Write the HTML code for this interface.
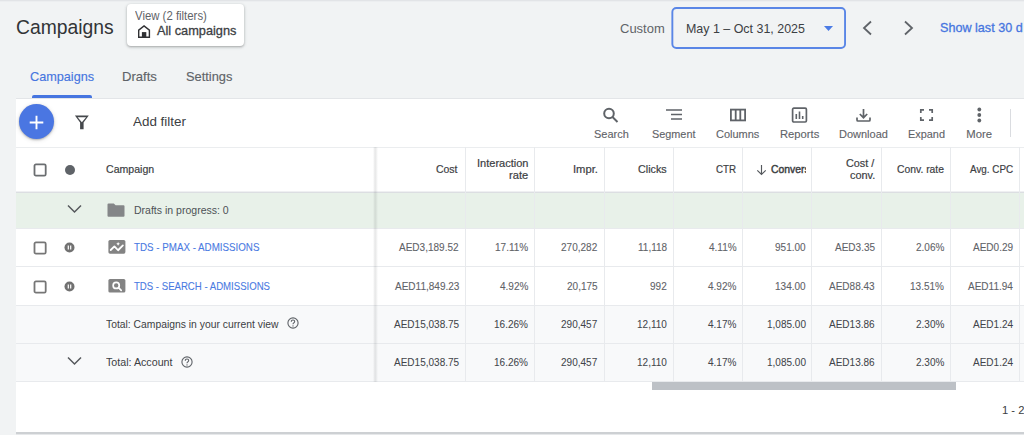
<!DOCTYPE html>
<html><head><meta charset="utf-8"><style>
html,body{margin:0;padding:0}
body{width:1024px;height:435px;overflow:hidden;background:#f1f3f4;position:relative;font-family:"Liberation Sans",sans-serif}
.t{position:absolute;white-space:nowrap;line-height:1;transform-origin:0 0}
.r{position:absolute;box-sizing:content-box}
svg.r{overflow:visible}
</style></head><body>
<div class="r" style="left:0px;top:0px;width:1024px;height:1px;background:#e2e4e7"></div>
<div class="r" style="left:0px;top:1px;width:1024px;height:1px;background:#eceef0"></div>
<span class="t" style="left:15.54px;top:17.37px;font-size:20.5px;color:#323437;transform:scaleX(0.9413);">Campaigns</span>
<div class="r" style="left:127px;top:4px;width:117px;height:42px;background:#fff;border-radius:4px;box-shadow:0 1px 2px rgba(60,64,67,.3),0 1px 3px 1px rgba(60,64,67,.12)"></div>
<span class="t" style="left:135.24px;top:10.10px;font-size:12px;color:#5f6368;transform:scaleX(0.9480);">View (2 filters)</span>
<svg class="r" style="left:138px;top:25px" width="13" height="13" viewBox="0 0 13 13"><path d="M0.7 12.3 V5.2 L6.05 0.9 L11.4 5.2 V12.3 Z" fill="none" stroke="#303134" stroke-width="1.4" stroke-linejoin="miter"/><rect x="3.9" y="7.1" width="4.4" height="5.6" fill="#303134"/></svg>
<span class="t" style="left:156.64px;top:24.45px;font-size:13px;color:#3c4043;-webkit-text-stroke:0.3px #3c4043;transform:scaleX(0.9813);">All campaigns</span>
<span class="t" style="left:620.15px;top:22.82px;font-size:12.8px;color:#5f6368;transform:scaleX(1.0150);">Custom</span>
<svg class="r" style="left:670px;top:6px" width="178" height="45" viewBox="0 0 178 45"><rect x="2.35" y="1.95" width="172.7" height="40.1" rx="4" fill="none" stroke="#5a86e6" stroke-width="1.9"/></svg>
<span class="t" style="left:685.61px;top:22.15px;font-size:13px;color:#3c4043;transform:scaleX(0.9566);">May 1 – Oct 31, 2025</span>
<svg class="r" style="left:823px;top:25px" width="11" height="7" viewBox="0 0 11 7"><path d="M1 1 L10 1 L5.5 6 Z" fill="#4b7be5"/></svg>
<svg class="r" style="left:860px;top:19px" width="14" height="18" viewBox="0 0 14 18"><path d="M11 2.5 L4 9 L11 15.5" fill="none" stroke="#5f6368" stroke-width="1.8"/></svg>
<svg class="r" style="left:902px;top:19px" width="14" height="18" viewBox="0 0 14 18"><path d="M3 2.5 L10 9 L3 15.5" fill="none" stroke="#5f6368" stroke-width="1.8"/></svg>
<span class="t" style="left:939.63px;top:21.45px;font-size:13px;color:#4675e0;-webkit-text-stroke:0.3px #4675e0;transform:scaleX(0.9697);">Show last 30 d</span>
<span class="t" style="left:30.27px;top:69.78px;font-size:13.2px;color:#4675e0;-webkit-text-stroke:0.15px #4675e0;transform:scaleX(0.9609);">Campaigns</span>
<span class="t" style="left:122.45px;top:69.78px;font-size:13.2px;color:#5f6368;-webkit-text-stroke:0.15px #5f6368;transform:scaleX(0.9923);">Drafts</span>
<span class="t" style="left:185.62px;top:69.78px;font-size:13.2px;color:#5f6368;-webkit-text-stroke:0.15px #5f6368;transform:scaleX(0.9730);">Settings</span>
<div class="r" style="left:32px;top:95px;width:60px;height:3px;background:#4675e0;border-radius:2px 2px 0 0"></div>
<div class="r" style="left:16px;top:98px;width:1010px;height:335px;background:#fff;border-top:1px solid #e3e5e8"></div>
<div class="r" style="left:16px;top:432px;width:1010px;height:1.5px;background:#cdd0d3"></div>
<div class="r" style="left:16px;top:433.5px;width:1010px;height:1.5px;background:#e6e8ea"></div>
<div class="r" style="left:16px;top:147px;width:1010px;height:1px;background:#ebedef"></div>
<div class="r" style="left:19.2px;top:104.3px;width:35px;height:35px;background:#4a76e2;border-radius:50%;box-shadow:0 1px 2px rgba(0,0,0,.25),0 1px 5px rgba(0,0,0,.12)"></div>
<svg class="r" style="left:29px;top:114.5px" width="15" height="15" viewBox="0 0 15 15"><path d="M7.5 0.7 V14.3 M0.7 7.5 H14.3" stroke="#fff" stroke-width="1.9"/></svg>
<svg class="r" style="left:74px;top:115px" width="16" height="15" viewBox="0 0 16 15"><path d="M0.9 0.5 H14.8 L9.6 7.4 V14.3 H6.1 V7.4 Z M3.6 2.2 L7.85 7.2 L12.1 2.2 Z" fill="#45484c" fill-rule="evenodd"/></svg>
<span class="t" style="left:133.43px;top:116.32px;font-size:12.8px;color:#3c4043;transform:scaleX(1.0490);">Add filter</span>
<span class="t" style="left:593.51px;top:128.50px;font-size:11.3px;color:#5f6368;-webkit-text-stroke:0.12px #5f6368;transform:scaleX(0.9704);">Search</span>
<span class="t" style="left:651.81px;top:128.50px;font-size:11.3px;color:#5f6368;-webkit-text-stroke:0.12px #5f6368;transform:scaleX(0.9611);">Segment</span>
<span class="t" style="left:716.15px;top:128.50px;font-size:11.3px;color:#5f6368;-webkit-text-stroke:0.12px #5f6368;transform:scaleX(0.9721);">Columns</span>
<span class="t" style="left:779.50px;top:128.50px;font-size:11.3px;color:#5f6368;-webkit-text-stroke:0.12px #5f6368;transform:scaleX(0.9935);">Reports</span>
<span class="t" style="left:839.12px;top:128.50px;font-size:11.3px;color:#5f6368;-webkit-text-stroke:0.12px #5f6368;transform:scaleX(0.9735);">Download</span>
<span class="t" style="left:908.13px;top:128.50px;font-size:11.3px;color:#5f6368;-webkit-text-stroke:0.12px #5f6368;transform:scaleX(0.9654);">Expand</span>
<span class="t" style="left:966.30px;top:128.50px;font-size:11.3px;color:#5f6368;-webkit-text-stroke:0.12px #5f6368;">More</span>
<svg class="r" style="left:602px;top:107px" width="17" height="16" viewBox="0 0 17 16"><circle cx="7" cy="6.5" r="4.8" fill="none" stroke="#5f6368" stroke-width="2"/><path d="M10.5 10 L15.5 15" stroke="#5f6368" stroke-width="2"/></svg>
<svg class="r" style="left:665px;top:108px" width="18" height="14" viewBox="0 0 18 14"><path d="M1 2 H17 M6 6.5 H17 M6 11 H17" stroke="#5f6368" stroke-width="1.6"/></svg>
<svg class="r" style="left:729px;top:108px" width="18" height="14" viewBox="0 0 18 14"><rect x="1.9" y="1.6" width="14.2" height="10.8" fill="none" stroke="#5f6368" stroke-width="1.8"/><path d="M6.7 1.6 V12.4 M11.3 1.6 V12.4" stroke="#5f6368" stroke-width="1.8"/></svg>
<svg class="r" style="left:791px;top:107px" width="17" height="16" viewBox="0 0 17 16"><rect x="1.6" y="1.2" width="13.8" height="13.8" rx="1.2" fill="none" stroke="#5f6368" stroke-width="1.7"/><path d="M5.3 7 V12 M8.5 4.5 V12 M11.7 9 V12" stroke="#5f6368" stroke-width="1.6"/></svg>
<svg class="r" style="left:855px;top:108px" width="17" height="15" viewBox="0 0 17 15"><path d="M8.5 1 V9.5 M4.8 6 L8.5 9.7 L12.2 6" fill="none" stroke="#5f6368" stroke-width="1.7"/><path d="M2 9.5 V12 Q2 13 3 13 H14 Q15 13 15 12 V9.5" fill="none" stroke="#5f6368" stroke-width="1.7"/></svg>
<svg class="r" style="left:919px;top:108px" width="15" height="14" viewBox="0 0 15 14"><path d="M1.8 5 V1.8 H5 M10 1.8 H13.2 V5 M13.2 9 V12.2 H10 M5 12.2 H1.8 V9" fill="none" stroke="#5f6368" stroke-width="1.7"/></svg>
<svg class="r" style="left:976px;top:107px" width="7" height="16" viewBox="0 0 7 16"><circle cx="3.3" cy="2.5" r="1.9" fill="#5f6368"/><circle cx="3.3" cy="8" r="1.9" fill="#5f6368"/><circle cx="3.3" cy="13.5" r="1.9" fill="#5f6368"/></svg>
<div class="r" style="left:1010px;top:109px;width:1px;height:28px;background:#dadce0"></div>
<div class="r" style="left:16px;top:192px;width:1010px;height:36px;background:#e8f1e9"></div>
<div class="r" style="left:16px;top:228px;width:1010px;height:38.5px;background:#fff"></div>
<div class="r" style="left:16px;top:266.5px;width:1010px;height:38.5px;background:#fff"></div>
<div class="r" style="left:16px;top:305px;width:1010px;height:38.30000000000001px;background:#f8f9fa"></div>
<div class="r" style="left:16px;top:343.3px;width:1010px;height:38.19999999999999px;background:#f8f9fa"></div>
<div class="r" style="left:16px;top:191px;width:1010px;height:1px;background:#eff0f2"></div>
<div class="r" style="left:16px;top:192px;width:1010px;height:1px;background:#dcdee2"></div>
<div class="r" style="left:16px;top:228px;width:1010px;height:1px;background:#e8eaed"></div>
<div class="r" style="left:16px;top:266px;width:1010px;height:1px;background:#e8eaed"></div>
<div class="r" style="left:16px;top:304.5px;width:1010px;height:1px;background:#e8eaed"></div>
<div class="r" style="left:16px;top:343px;width:1010px;height:1px;background:#e8eaed"></div>
<div class="r" style="left:16px;top:381px;width:1010px;height:1px;background:#e8eaed"></div>
<div class="r" style="left:464.9px;top:147px;width:1px;height:234.5px;background:#e8eaed"></div>
<div class="r" style="left:534.21px;top:147px;width:1px;height:234.5px;background:#e8eaed"></div>
<div class="r" style="left:603.52px;top:147px;width:1px;height:234.5px;background:#e8eaed"></div>
<div class="r" style="left:672.8299999999999px;top:147px;width:1px;height:234.5px;background:#e8eaed"></div>
<div class="r" style="left:742.14px;top:147px;width:1px;height:234.5px;background:#e8eaed"></div>
<div class="r" style="left:811.45px;top:147px;width:1px;height:234.5px;background:#e8eaed"></div>
<div class="r" style="left:880.76px;top:147px;width:1px;height:234.5px;background:#e8eaed"></div>
<div class="r" style="left:950.0699999999999px;top:147px;width:1px;height:234.5px;background:#e8eaed"></div>
<div class="r" style="left:1019.38px;top:147px;width:1px;height:234.5px;background:#e8eaed"></div>
<div class="r" style="left:373px;top:147px;width:5px;height:234.5px;background:linear-gradient(90deg,rgba(0,0,0,0) 0%,rgba(60,64,67,.09) 30%,rgba(60,64,67,.12) 45%,rgba(60,64,67,.07) 70%,rgba(0,0,0,0) 100%)"></div>
<div class="r" style="left:652px;top:381.5px;width:304px;height:8.3px;background:#bdc1c6"></div>
<svg class="r" style="left:33px;top:163px" width="15" height="15" viewBox="0 0 15 15"><rect x="1.5" y="1.4" width="11.2" height="11.2" rx="1.4" fill="none" stroke="#6b6e71" stroke-width="1.8"/></svg>
<div class="r" style="left:64.5px;top:164.8px;width:10.2px;height:10.2px;background:#5f6368;border-radius:50%"></div>
<span class="t" style="left:105.67px;top:163.95px;font-size:11px;color:#3c4043;-webkit-text-stroke:0.2px #3c4043;transform:scaleX(0.9603);">Campaign</span>
<span class="t" style="left:436.48px;top:164.05px;font-size:11px;color:#3c4043;-webkit-text-stroke:0.2px #3c4043;transform:scaleX(0.9500);">Cost</span>
<span class="t" style="left:572.59px;top:164.05px;font-size:11px;color:#3c4043;-webkit-text-stroke:0.2px #3c4043;transform:scaleX(1.0205);">Impr.</span>
<span class="t" style="left:637.86px;top:164.05px;font-size:11px;color:#3c4043;-webkit-text-stroke:0.2px #3c4043;transform:scaleX(0.9760);">Clicks</span>
<span class="t" style="left:716.21px;top:164.05px;font-size:11px;color:#3c4043;-webkit-text-stroke:0.2px #3c4043;transform:scaleX(0.8859);">CTR</span>
<span class="t" style="left:897.38px;top:164.05px;font-size:11px;color:#3c4043;-webkit-text-stroke:0.2px #3c4043;transform:scaleX(0.9408);">Conv. rate</span>
<span class="t" style="left:970.25px;top:164.05px;font-size:11px;color:#3c4043;-webkit-text-stroke:0.2px #3c4043;transform:scaleX(0.8975);">Avg. CPC</span>
<span class="t" style="left:476.81px;top:158.05px;font-size:11px;color:#3c4043;-webkit-text-stroke:0.2px #3c4043;transform:scaleX(1.0027);">Interaction</span>
<span class="t" style="left:508.98px;top:170.15px;font-size:11px;color:#3c4043;-webkit-text-stroke:0.2px #3c4043;transform:scaleX(1.0107);">rate</span>
<span class="t" style="left:846.26px;top:158.05px;font-size:11px;color:#3c4043;-webkit-text-stroke:0.2px #3c4043;transform:scaleX(0.9837);">Cost /</span>
<span class="t" style="left:849.96px;top:170.15px;font-size:11px;color:#3c4043;-webkit-text-stroke:0.2px #3c4043;transform:scaleX(0.9902);">conv.</span>
<svg class="r" style="left:756px;top:164px" width="11" height="12" viewBox="0 0 11 12"><path d="M5.5 1 V10.5 M1.3 6.3 L5.5 10.5 L9.7 6.3" fill="none" stroke="#55595d" stroke-width="1.15"/></svg>
<div class="r" style="left:770px;top:160px;width:36px;height:18px;overflow:hidden">
<span class="t" style="left:0.58px;top:3.95px;font-size:11px;color:#3c4043;-webkit-text-stroke:0.45px #3c4043;transform:scaleX(0.9422);">Conversions</span>
</div>
<svg class="r" style="left:66px;top:203px" width="17" height="12" viewBox="0 0 17 12"><path d="M2 2.5 L8.5 9 L15 2.5" fill="none" stroke="#55585c" stroke-width="1.5"/></svg>
<svg class="r" style="left:107px;top:203px" width="18" height="14" viewBox="0 0 18 14"><path d="M1.5 0.5 H6.8 L8.6 2.3 H16.5 Q17.5 2.3 17.5 3.3 V12.8 Q17.5 13.8 16.5 13.8 H1.5 Q0.5 13.8 0.5 12.8 V1.5 Q0.5 0.5 1.5 0.5 Z" fill="#848688"/></svg>
<span class="t" style="left:133.76px;top:205.18px;font-size:11.2px;color:#4d5156;transform:scaleX(0.9401);">Drafts in progress: 0</span>
<svg class="r" style="left:33px;top:240.9px" width="15" height="15" viewBox="0 0 15 15"><rect x="1.5" y="1.4" width="11.2" height="11.2" rx="1.4" fill="none" stroke="#767676" stroke-width="1.8"/></svg>
<svg class="r" style="left:64px;top:241.8px" width="11" height="11" viewBox="0 0 11 11"><circle cx="5.5" cy="5.5" r="5" fill="#717171"/><path d="M4.3 3.4 V7.6 M6.7 3.4 V7.6" stroke="#fff" stroke-width="1.2"/></svg>
<svg class="r" style="left:33px;top:279.70000000000005px" width="15" height="15" viewBox="0 0 15 15"><rect x="1.5" y="1.4" width="11.2" height="11.2" rx="1.4" fill="none" stroke="#767676" stroke-width="1.8"/></svg>
<svg class="r" style="left:64px;top:280.6px" width="11" height="11" viewBox="0 0 11 11"><circle cx="5.5" cy="5.5" r="5" fill="#717171"/><path d="M4.3 3.4 V7.6 M6.7 3.4 V7.6" stroke="#fff" stroke-width="1.2"/></svg>
<svg class="r" style="left:107.5px;top:240.3px" width="18" height="14" viewBox="0 0 18 14"><rect x="0.4" y="0" width="17" height="13.7" rx="1.6" fill="#838383"/><path d="M2.7 10 L6.4 6.35 L10.1 10.25 L14.9 5.4" fill="none" stroke="#fff" stroke-width="1.8" stroke-linecap="round" stroke-linejoin="round"/><path d="M10.1 1.9 Q10.5 3.4 12 3.8 Q10.5 4.2 10.1 5.7 Q9.7 4.2 8.2 3.8 Q9.7 3.4 10.1 1.9 Z" fill="#fff"/></svg>
<svg class="r" style="left:107.5px;top:279px" width="18" height="14" viewBox="0 0 18 14"><rect x="0.4" y="0" width="17" height="13.5" rx="1.6" fill="#838383"/><circle cx="8.2" cy="6.4" r="3.05" fill="none" stroke="#fff" stroke-width="1.7"/><path d="M10.5 8.7 L13.2 11.3" stroke="#fff" stroke-width="1.7" stroke-linecap="round"/></svg>
<span class="t" style="left:134.10px;top:242.08px;font-size:11.2px;color:#4a7ae2;-webkit-text-stroke:0.1px #4a7ae2;transform:scaleX(0.8733);">TDS - PMAX - ADMISSIONS</span>
<span class="t" style="left:134.11px;top:280.88px;font-size:11.2px;color:#4a7ae2;-webkit-text-stroke:0.1px #4a7ae2;transform:scaleX(0.8580);">TDS - SEARCH - ADMISSIONS</span>
<span class="t" style="left:106.19px;top:319.08px;font-size:11.2px;color:#3c4043;transform:scaleX(0.9248);">Total: Campaigns in your current view</span>
<span class="t" style="left:106.19px;top:356.88px;font-size:11.2px;color:#3c4043;transform:scaleX(0.9548);">Total: Account</span>
<svg class="r" style="left:287px;top:317px" width="12" height="12" viewBox="0 0 12 12"><circle cx="6" cy="6" r="5.1" fill="none" stroke="#5f6368" stroke-width="1.1"/><path d="M4.3 4.7 Q4.3 3 6 3 Q7.7 3 7.7 4.5 Q7.7 5.4 6.7 5.9 Q6 6.3 6 7.3" fill="none" stroke="#5f6368" stroke-width="1.1"/><circle cx="6" cy="8.9" r="0.7" fill="#5f6368"/></svg>
<svg class="r" style="left:180.5px;top:355.5px" width="12" height="12" viewBox="0 0 12 12"><circle cx="6" cy="6" r="5.1" fill="none" stroke="#5f6368" stroke-width="1.1"/><path d="M4.3 4.7 Q4.3 3 6 3 Q7.7 3 7.7 4.5 Q7.7 5.4 6.7 5.9 Q6 6.3 6 7.3" fill="none" stroke="#5f6368" stroke-width="1.1"/><circle cx="6" cy="8.9" r="0.7" fill="#5f6368"/></svg>
<svg class="r" style="left:66px;top:355px" width="17" height="12" viewBox="0 0 17 12"><path d="M2 2.5 L8.5 9 L15 2.5" fill="none" stroke="#55585c" stroke-width="1.5"/></svg>
<span class="t" style="left:399.46px;top:242.08px;font-size:11.2px;color:#5f6368;-webkit-text-stroke:0.1px #5f6368;transform:scaleX(0.8950);">AED3,189.52</span>
<span class="t" style="left:494.98px;top:242.08px;font-size:11.2px;color:#5f6368;-webkit-text-stroke:0.1px #5f6368;transform:scaleX(0.8950);">17.11%</span>
<span class="t" style="left:561.48px;top:242.08px;font-size:11.2px;color:#5f6368;-webkit-text-stroke:0.1px #5f6368;transform:scaleX(0.8950);">270,282</span>
<span class="t" style="left:637.76px;top:242.08px;font-size:11.2px;color:#5f6368;-webkit-text-stroke:0.1px #5f6368;transform:scaleX(0.8950);">11,118</span>
<span class="t" style="left:708.52px;top:242.08px;font-size:11.2px;color:#5f6368;-webkit-text-stroke:0.1px #5f6368;transform:scaleX(0.8950);">4.11%</span>
<span class="t" style="left:774.88px;top:242.08px;font-size:11.2px;color:#5f6368;-webkit-text-stroke:0.1px #5f6368;transform:scaleX(0.8950);">951.00</span>
<span class="t" style="left:834.76px;top:242.08px;font-size:11.2px;color:#5f6368;-webkit-text-stroke:0.1px #5f6368;transform:scaleX(0.8950);">AED3.35</span>
<span class="t" style="left:915.70px;top:242.08px;font-size:11.2px;color:#5f6368;-webkit-text-stroke:0.1px #5f6368;transform:scaleX(0.8950);">2.06%</span>
<span class="t" style="left:973.44px;top:242.08px;font-size:11.2px;color:#5f6368;-webkit-text-stroke:0.1px #5f6368;transform:scaleX(0.8950);">AED0.29</span>
<span class="t" style="left:394.60px;top:281.08px;font-size:11.2px;color:#5f6368;-webkit-text-stroke:0.1px #5f6368;transform:scaleX(0.8950);">AED11,849.23</span>
<span class="t" style="left:499.84px;top:281.08px;font-size:11.2px;color:#5f6368;-webkit-text-stroke:0.1px #5f6368;transform:scaleX(0.8950);">4.92%</span>
<span class="t" style="left:566.95px;top:281.08px;font-size:11.2px;color:#5f6368;-webkit-text-stroke:0.1px #5f6368;transform:scaleX(0.8950);">20,175</span>
<span class="t" style="left:650.34px;top:281.08px;font-size:11.2px;color:#5f6368;-webkit-text-stroke:0.1px #5f6368;transform:scaleX(0.8950);">992</span>
<span class="t" style="left:707.77px;top:281.08px;font-size:11.2px;color:#5f6368;-webkit-text-stroke:0.1px #5f6368;transform:scaleX(0.8950);">4.92%</span>
<span class="t" style="left:774.88px;top:281.08px;font-size:11.2px;color:#5f6368;-webkit-text-stroke:0.1px #5f6368;transform:scaleX(0.8950);">134.00</span>
<span class="t" style="left:829.20px;top:281.08px;font-size:11.2px;color:#5f6368;-webkit-text-stroke:0.1px #5f6368;transform:scaleX(0.8950);">AED88.43</span>
<span class="t" style="left:910.09px;top:281.08px;font-size:11.2px;color:#5f6368;-webkit-text-stroke:0.1px #5f6368;transform:scaleX(0.8950);">13.51%</span>
<span class="t" style="left:968.42px;top:281.08px;font-size:11.2px;color:#5f6368;-webkit-text-stroke:0.1px #5f6368;transform:scaleX(0.8950);">AED11.94</span>
<span class="t" style="left:393.79px;top:319.08px;font-size:11.2px;color:#42454a;-webkit-text-stroke:0.05px #42454a;transform:scaleX(0.8950);">AED15,038.75</span>
<span class="t" style="left:494.23px;top:319.08px;font-size:11.2px;color:#42454a;-webkit-text-stroke:0.05px #42454a;transform:scaleX(0.8950);">16.26%</span>
<span class="t" style="left:561.48px;top:319.08px;font-size:11.2px;color:#42454a;-webkit-text-stroke:0.05px #42454a;transform:scaleX(0.8950);">290,457</span>
<span class="t" style="left:637.01px;top:319.08px;font-size:11.2px;color:#42454a;-webkit-text-stroke:0.05px #42454a;transform:scaleX(0.8950);">12,110</span>
<span class="t" style="left:707.77px;top:319.08px;font-size:11.2px;color:#42454a;-webkit-text-stroke:0.05px #42454a;transform:scaleX(0.8950);">4.17%</span>
<span class="t" style="left:766.56px;top:319.08px;font-size:11.2px;color:#42454a;-webkit-text-stroke:0.05px #42454a;transform:scaleX(0.8950);">1,085.00</span>
<span class="t" style="left:829.20px;top:319.08px;font-size:11.2px;color:#42454a;-webkit-text-stroke:0.05px #42454a;transform:scaleX(0.8950);">AED13.86</span>
<span class="t" style="left:915.70px;top:319.08px;font-size:11.2px;color:#42454a;-webkit-text-stroke:0.05px #42454a;transform:scaleX(0.8950);">2.30%</span>
<span class="t" style="left:973.28px;top:319.08px;font-size:11.2px;color:#42454a;-webkit-text-stroke:0.05px #42454a;transform:scaleX(0.8950);">AED1.24</span>
<span class="t" style="left:393.79px;top:356.88px;font-size:11.2px;color:#42454a;-webkit-text-stroke:0.05px #42454a;transform:scaleX(0.8950);">AED15,038.75</span>
<span class="t" style="left:494.23px;top:356.88px;font-size:11.2px;color:#42454a;-webkit-text-stroke:0.05px #42454a;transform:scaleX(0.8950);">16.26%</span>
<span class="t" style="left:561.48px;top:356.88px;font-size:11.2px;color:#42454a;-webkit-text-stroke:0.05px #42454a;transform:scaleX(0.8950);">290,457</span>
<span class="t" style="left:637.01px;top:356.88px;font-size:11.2px;color:#42454a;-webkit-text-stroke:0.05px #42454a;transform:scaleX(0.8950);">12,110</span>
<span class="t" style="left:707.77px;top:356.88px;font-size:11.2px;color:#42454a;-webkit-text-stroke:0.05px #42454a;transform:scaleX(0.8950);">4.17%</span>
<span class="t" style="left:766.56px;top:356.88px;font-size:11.2px;color:#42454a;-webkit-text-stroke:0.05px #42454a;transform:scaleX(0.8950);">1,085.00</span>
<span class="t" style="left:829.20px;top:356.88px;font-size:11.2px;color:#42454a;-webkit-text-stroke:0.05px #42454a;transform:scaleX(0.8950);">AED13.86</span>
<span class="t" style="left:915.70px;top:356.88px;font-size:11.2px;color:#42454a;-webkit-text-stroke:0.05px #42454a;transform:scaleX(0.8950);">2.30%</span>
<span class="t" style="left:973.28px;top:356.88px;font-size:11.2px;color:#42454a;-webkit-text-stroke:0.05px #42454a;transform:scaleX(0.8950);">AED1.24</span>
<span class="t" style="left:1002.36px;top:405.37px;font-size:11.8px;color:#3c4043;transform:scaleX(0.9500);">1 - 2 of 2</span>
</body></html>
